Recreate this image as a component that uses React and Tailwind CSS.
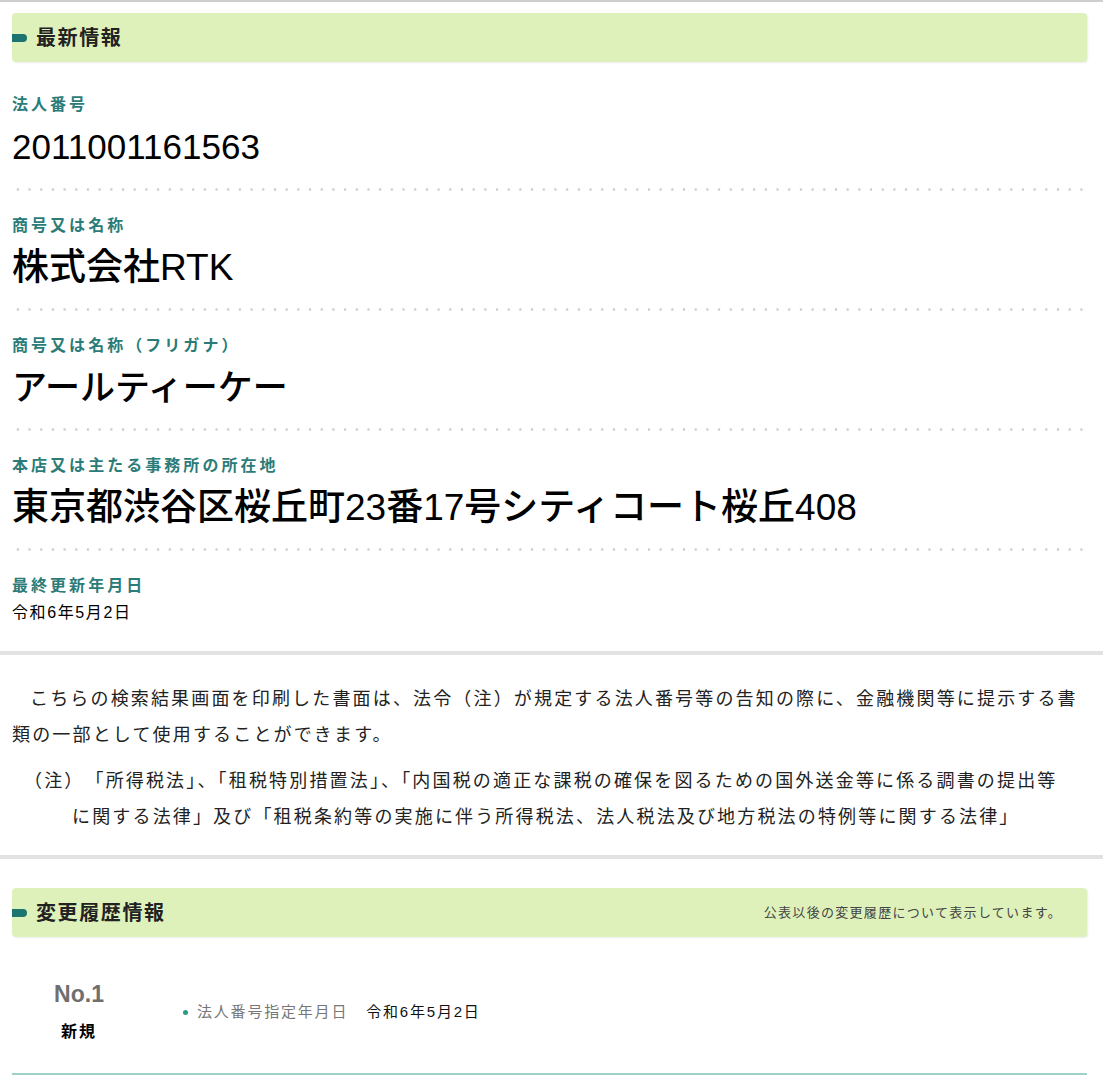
const font = { fontFamily: '"Liberation Sans", "Noto Sans CJK JP", sans-serif' };

const items = [
  { label: '法人番号', value: '2011001161563', size: 'text-[35px]' },
  { label: '商号又は名称', value: '株式会社RTK', size: 'text-[37px]' },
  { label: '商号又は名称（フリガナ）', value: 'アールティーケー', size: 'text-[35px]' },
  { label: '本店又は主たる事務所の所在地', value: '東京都渋谷区桜丘町23番17号シティコート桜丘408', size: 'text-[37px]' },
];

const Dots = () => (
  <div className="h-[3px] w-full bg-[radial-gradient(circle,#cfcfcf_1px,transparent_1.6px)] bg-[length:11.7px_3px] bg-repeat-x" />
);

const SectionHeader = ({ title, note }) => (
  <div className="flex h-[49px] items-center justify-between rounded-[4px] bg-[#dff1bb] pr-[25px] shadow-[1px_1px_2px_rgba(0,0,0,0.08)]">
    <div className="flex items-center">
      <span className="h-[8px] w-[15px] rounded-r-full bg-[#1b746f]" />
      <h2 className="ml-[9px] text-[20px] font-bold tracking-[0.08em] text-[#222]">{title}</h2>
    </div>
    {note && <span className="text-[13px] tracking-[0.1em] text-[#444]">{note}</span>}
  </div>
);

export default function App() {
  return (
    <div className="min-h-screen bg-white text-black" style={font}>
      <div className="h-[2px] bg-[#cfcfcf]" />

      {/* 最新情報 */}
      <section className="pl-[12px] pr-[16px] pt-[11px] pb-[28px]">
        <SectionHeader title="最新情報" />
        {items.map((it, i) => (
          <div key={it.label}>
            <div className={i === 0 ? 'pt-[33px] pb-[19px]' : 'pt-[25px] pb-[18px]'}>
              <div className="text-[16px] leading-[20px] font-bold tracking-[0.19em] text-[#2b7c78]">{it.label}</div>
              <div className={`mt-[10px] leading-[44px] whitespace-nowrap font-medium ${it.size}`}>{it.value}</div>
            </div>
            <Dots />
          </div>
        ))}
        <div className="pt-[25px]">
          <div className="text-[16px] leading-[20px] font-bold tracking-[0.19em] text-[#2b7c78]">最終更新年月日</div>
          <div className="mt-[7px] text-[16px] leading-[20px] tracking-[0.1em]">令和6年5月2日</div>
        </div>
      </section>

      <div className="h-[4px] bg-[#e2e2e2]" />

      {/* 注意書き */}
      <section className="pl-[12px] pr-[12px] pt-[26px] pb-[20px] text-[18px] leading-[36px] tracking-[0.12em] text-[#222]">
        <p className="indent-[1em] whitespace-nowrap">
          こちらの検索結果画面を印刷した書面は、法令（注）が規定する法人番号等の告知の際に、金融機関等に提示する書
          <br />
          類の一部として使用することができます。
        </p>
        <p className="mt-[10px] whitespace-nowrap pl-[60px] indent-[-48px]">
          （注）<span className="ml-[10px]">「所得税法」、「租税特別措置法」、「内国税の適正な課税の確保を図るための国外送金等に係る調書の提出等</span>
          <br />
          に関する法律」及び「租税条約等の実施に伴う所得税法、法人税法及び地方税法の特例等に関する法律」
        </p>
      </section>

      <div className="h-[4px] bg-[#e2e2e2]" />

      {/* 変更履歴情報 */}
      <section className="pl-[12px] pr-[16px] pt-[29px]">
        <SectionHeader title="変更履歴情報" note="公表以後の変更履歴について表示しています。" />
        <div className="flex items-center border-b-2 border-[#9fd0cb] pt-[45px] pb-[31px]">
          <div className="flex w-[134px] flex-col items-center">
            <div className="text-[23px] leading-[24px] font-bold text-[#6f6f6f]">No.1</div>
            <div className="mt-[16px] text-[16px] leading-[20px] font-bold tracking-[0.12em]">新規</div>
          </div>
          <div className="ml-[37px] flex items-center text-[15px] tracking-[0.12em]">
            <span className="h-[5px] w-[5px] rounded-full bg-[#2a9a84]" />
            <span className="ml-[9px] text-[#777]">法人番号指定年月日</span>
            <span className="ml-[18px] text-[#111]">令和6年5月2日</span>
          </div>
        </div>
      </section>
    </div>
  );
}
